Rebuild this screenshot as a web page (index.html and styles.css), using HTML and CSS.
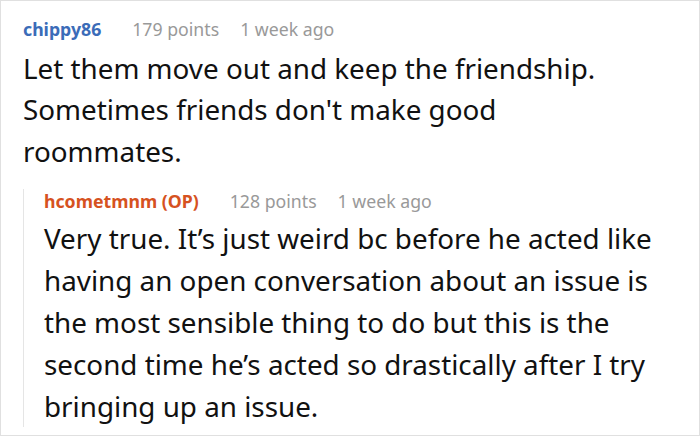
FILE: index.html
```html
<!DOCTYPE html>
<html>
<head>
<meta charset="utf-8">
<link rel="stylesheet" href="styles.css">
</head>
<body>
<div class="frame">
  <div class="comment">
    <div class="meta">
      <span class="user">chippy86</span>
      <span class="points">179 points</span>
      <span class="time">1 week ago</span>
    </div>
    <div class="text">Let them move out and keep the friendship. Sometimes friends don't make good roommates.</div>
    <div class="reply">
      <div class="meta">
        <span class="user op">hcometmnm (OP)</span>
        <span class="points">128 points</span>
        <span class="time">1 week ago</span>
      </div>
      <div class="text">Very true. It’s just weird bc before he acted like having an open conversation about an issue is the most sensible thing to do but this is the second time he’s acted so drastically after I try bringing up an issue.</div>
    </div>
  </div>
</div>
</body>
</html>
```
FILE: styles.css
```css
* { box-sizing: border-box; }
html, body { margin: 0; padding: 0; background: #fff; }
body { font-family: "Noto Sans", "Open Sans", sans-serif; color: #111; }
.frame {
  width: 700px;
  height: 436px;
  border: 1px solid #e0e0e0;
  overflow: hidden;
}
.comment {
  padding: 16px 42px 0 22px;
}
.meta {
  font-size: 17.7px;
  line-height: 24px;
  display: flex;
  align-items: baseline;
  margin-bottom: 6.5px;
  white-space: nowrap;
}
.user { font-weight: 700; color: #3b6cb8; margin-right: 31px; }
.user.op { color: #d6521f; }
.points { color: #999; margin-right: 21px; }
.time { color: #999; }
.text {
  font-size: 27.8px;
  line-height: 41.5px;
}
.reply {
  margin-top: 29px;
  border-left: 1px solid #e5e5e5;
  padding-left: 20px;
}
.reply .meta {
  margin-top: -12px;
  margin-bottom: 4.2px;
}
.reply .text {
  line-height: 42px;
  margin-bottom: -9.2px;
}
```
